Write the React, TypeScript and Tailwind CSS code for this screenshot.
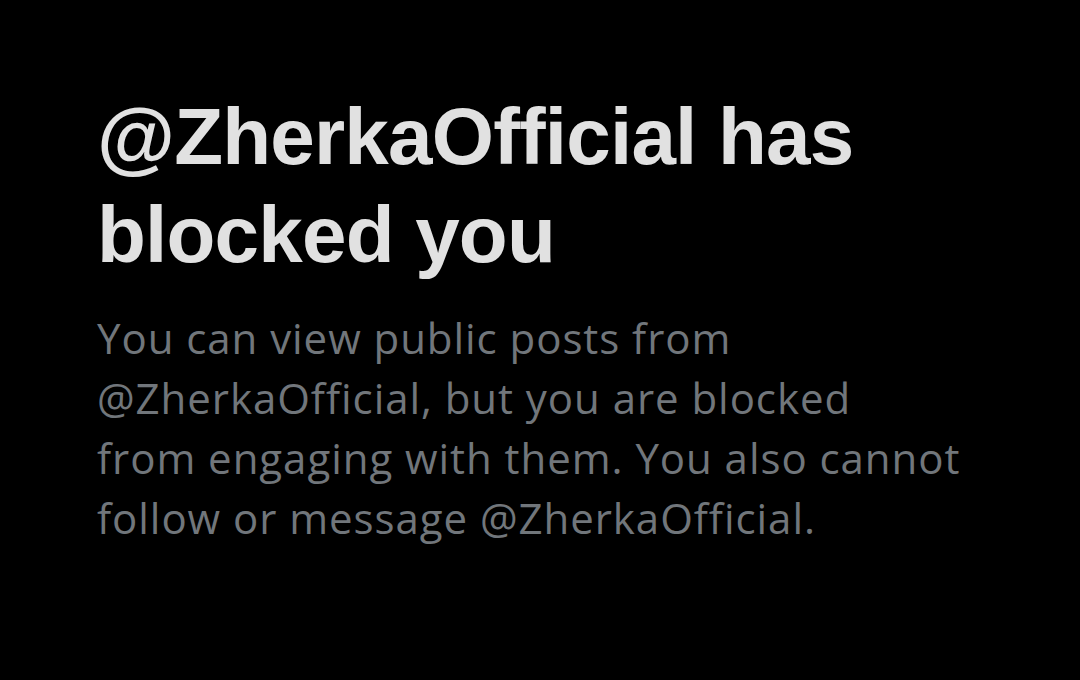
export default function App() {
  return (
    <div className="w-[1080px] h-[680px] bg-black overflow-hidden" style={{ fontFamily: '"Liberation Sans", Arial, sans-serif' }}>
      <div className="pl-[97px] pt-[88px] w-[1000px]">
        <h1 className="text-[80px] leading-[98px] font-bold text-[#e1e1e1] tracking-[-0.8px]">
          @ZherkaOfficial has<br />blocked you
        </h1>
        <p className="mt-[24px] text-[42px] leading-[60px] tracking-[0.95px] text-[#71767b]" style={{ fontFamily: '"Open Sans", sans-serif' }}>
          You can view public posts from<br />@ZherkaOfficial, but you are blocked<br />from engaging with them. You also cannot<br />follow or message @ZherkaOfficial.
        </p>
      </div>
    </div>
  );
}
